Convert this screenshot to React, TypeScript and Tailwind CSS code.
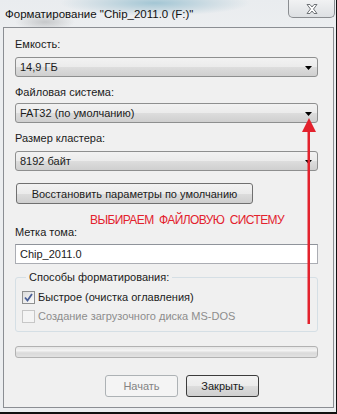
import React from "react";

function ComboBox({ value }: { value: string }) {
    return (
        <div className="h-[20px] w-[303px] rounded-[3px] border border-[#8e8f8f] bg-[linear-gradient(#f2f2f2_0%,#ebebeb_50%,#dddddd_51%,#cfcfcf_100%)] flex items-center justify-between pl-[4px] pr-[5px]">
            <span className="leading-[16px]">{value}</span>
            <svg width="7" height="4" viewBox="0 0 7 4" className="mt-[1px]">
                <path d="M0 0h7L3.5 4z" fill="#000" />
            </svg>
        </div>
    );
}

function CloseGlyph() {
    return (
        <svg width="16" height="12" viewBox="0 0 16 12">
            <path
                d="M3 1.5h3l2 2.5 2-2.5h3l-3.5 4.5 3.5 4.5h-3l-2-2.5-2 2.5h-3l3.5-4.5z"
                fill="#ffffff"
                stroke="#6f7377"
                strokeWidth="1"
                strokeLinejoin="round"
            />
        </svg>
    );
}

export default function App() {
    return (
        <div className="relative w-[337px] h-[414px] overflow-hidden border-r border-b-[2px] border-[#111] bg-[#eceef0] text-[11px] text-[#1b1b1b] font-['Liberation_Sans',Arial,sans-serif]">
            {/* Title bar */}
            <div className="h-[27px] flex justify-between bg-[radial-gradient(ellipse_95px_13px_at_155px_3px,#a3c6d4_0%,#cfdde4_60%,transparent_100%),radial-gradient(ellipse_30px_9px_at_45px_22px,#c6c8ca_0%,transparent_100%),linear-gradient(#e9ecef,#eceef0)]">
                <span className="pl-[5px] pt-[6px] text-[11.5px] leading-[16px] text-[#111]">
                    Форматирование "Chip_2011.0 (F:)"
                </span>
                <div className="w-[47px] h-[18px] mr-[1px] rounded-b-[5px] border border-t-0 border-[#8a8d91] bg-[linear-gradient(#f1f2f3,#dde0e3)] flex items-center justify-center">
                    <CloseGlyph />
                </div>
            </div>

            {/* Dialog body */}
            <div className="ml-[3px] w-[331px] h-[381px] border border-[#8b8e93] bg-[#f0f0f0] pl-[11px] pt-[8px] flex flex-col items-start">
                <span className="leading-[16px]">Емкость:</span>
                <div className="mt-[5px]">
                    <ComboBox value="14,9 ГБ" />
                </div>

                <span className="mt-[7px] leading-[16px]">Файловая система:</span>
                <div className="mt-[3px]">
                    <ComboBox value="FAT32 (по умолчанию)" />
                </div>

                <span className="mt-[7px] leading-[16px]">Размер кластера:</span>
                <div className="mt-[5px]">
                    <ComboBox value="8192 байт" />
                </div>

                <button className="mt-[12px] ml-[1px] w-[237px] h-[21px] overflow-hidden flex items-center justify-center rounded-[3px] border border-[#707070] bg-[linear-gradient(#f2f2f2_0%,#ebebeb_50%,#dddddd_51%,#cfcfcf_100%)] leading-[16px] whitespace-nowrap">
                    Восстановить параметры по умолчанию
                </button>

                <span className="mt-[20px] leading-[16px]">Метка тома:</span>
                <div className="mt-[4px] w-[303px] h-[20px] border border-[#abadb3] border-t-[#8f939a] bg-white pl-[4px] flex items-center">
                    <span className="leading-[16px]">Chip_2011.0</span>
                </div>

                <fieldset className="mt-[5px] w-[303px] rounded-[3px] border border-[#d5dfe5] pl-[6px] pb-[7px]">
                    <legend className="ml-[4px] px-[3px] leading-[16px]">Способы форматирования:</legend>
                    <label className="mt-[4px] flex items-center gap-[3px] leading-[16px]">
                        <span className="w-[13px] h-[13px] border border-[#8e8f8f] bg-[linear-gradient(135deg,#dcdcdc,#fbfbfb)] p-[1px] flex items-center justify-center">
                            <svg width="9" height="9" viewBox="0 0 9 9">
                                <path d="M1 4.5l2.5 3L8 1" fill="none" stroke="#4a5f97" strokeWidth="1.8" />
                            </svg>
                        </span>
                        Быстрое (очистка оглавления)
                    </label>
                    <label className="mt-[3px] flex items-center gap-[3px] leading-[16px] text-[#8d8d8d]">
                        <span className="w-[13px] h-[13px] border border-[#c7c7c7] bg-[#f4f4f4]" />
                        Создание загрузочного диска MS-DOS
                    </label>
                </fieldset>

                <div className="mt-[14px] w-[303px] h-[12px] rounded-[3px] border border-[#b2b2b2] bg-[linear-gradient(#e6e6e6_0%,#f3f3f3_35%,#dadada_60%,#e2e2e2_100%)]" />

                <div className="mt-[17px] ml-[90px] flex gap-[8px]">
                    <button className="w-[73px] h-[22px] rounded-[3px] border border-[#adb2b5] bg-[#f4f4f4] text-[#838383] leading-[16px]">
                        Начать
                    </button>
                    <button className="w-[73px] h-[22px] rounded-[3px] border border-[#3c3c3c] bg-[linear-gradient(#f2f2f2_0%,#ebebeb_50%,#dddddd_51%,#cfcfcf_100%)] leading-[16px]">
                        Закрыть
                    </button>
                </div>
            </div>

            {/* Annotation */}
            <span className="absolute left-[90px] top-[212px] whitespace-pre text-[12px] leading-[16px] tracking-[-0.6px] text-[#e3222d] font-['Liberation_Sans_Narrow','Liberation_Sans',sans-serif]">
                {"ВЫБИРАЕМ  ФАЙЛОВУЮ  СИСТЕМУ"}
            </span>
            <svg className="absolute left-[300px] top-[117px]" width="18" height="210" viewBox="0 0 18 210">
                <path d="M9 1L2 15h14z" fill="#e3222d" />
                <rect x="7.5" y="14" width="2.5" height="193" fill="#e3222d" />
            </svg>
        </div>
    );
}
